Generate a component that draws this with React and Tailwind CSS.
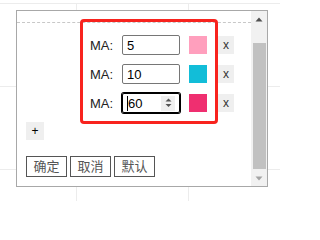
export default function App() {
  const rows = [
    { v: "5", c: "bg-[#ff9fbd]" },
    { v: "10", c: "bg-[#12bdd8]" },
    { v: "60", c: "bg-[#ef2f70]", focus: true },
  ];
  return (
    <div className="relative w-[280px] h-[201px] overflow-hidden bg-white font-['Liberation_Sans','Noto_Sans_CJK_SC',sans-serif] text-[13px] text-black">
      <div className="pt-[3px]">
        {[0, 1, 2].map((r) => (
          <div key={r} className="flex h-[83px] border-t border-[#ececec]">
            <div className="w-[77px] border-r border-[#ececec]" />
            <div className="w-[112px] border-r border-[#ececec]" />
            <div className="flex-1" />
          </div>
        ))}
      </div>

      <div className="absolute left-[16px] top-[10px] flex h-[177px] w-[252px] border border-[#a8a8a8] bg-white">
        <div className="flex-1 pt-[11px]">
          <div className="border-t border-dashed border-[#c8c8c8]" />
          <div className="px-[9px] pt-[12px]">
            <div className="flex flex-col gap-[9px] pl-[64px]">
              {rows.map((r, i) => (
                <div key={i} className="flex h-[20px] items-center">
                  <span className="w-[32px] leading-none text-[#222]">MA:</span>
                  {r.focus ? (
                    <div className="flex h-[20px] w-[58px] items-center rounded-[2px] border border-black pl-[4px] pr-[4px] ring-1 ring-black">
                      <span className="h-[15px] w-px bg-black" />
                      <span className="leading-none">60</span>
                      <span className="ml-auto flex h-[15px] w-[14px] items-center justify-center bg-[#efefef]">
                        <svg width="7" height="10" viewBox="0 0 7 10">
                          <path d="M3.5 0.5 L6.5 3.5 L0.5 3.5 Z" fill="#555" />
                          <path d="M0.5 6 L6.5 6 L3.5 9 Z" fill="#555" />
                        </svg>
                      </span>
                    </div>
                  ) : (
                    <div className="flex h-[20px] w-[58px] items-center rounded-[2px] border border-[#767676] pl-[4px] leading-none">
                      {r.v}
                    </div>
                  )}
                  <div className={`ml-[9px] h-[18px] w-[18px] ${r.c}`} />
                  <div className="ml-[11px] flex h-[18px] w-[16px] items-center justify-center bg-[#efefef] text-[12px] leading-none text-[#333]">
                    x
                  </div>
                </div>
              ))}
            </div>
            <div className="mt-[9px] flex h-[18px] w-[18px] items-center justify-center bg-[#efefef] text-[12px] leading-none">
              +
            </div>
            <div className="mt-[16px] flex gap-[3px]">
              {["确定", "取消", "默认"].map((t) => (
                <div
                  key={t}
                  className="flex h-[21px] w-[41px] items-center justify-center border border-[#555] text-[13px] leading-none text-[#555]"
                >
                  {t}
                </div>
              ))}
            </div>
          </div>
        </div>
        <div className="flex w-[16px] flex-col bg-[#f1f1f1]">
          <div className="flex h-[16px] items-center justify-center">
            <svg width="8" height="5" viewBox="0 0 8 5">
              <path d="M4 0.5 L7.5 4.5 L0.5 4.5 Z" fill="#505050" />
            </svg>
          </div>
          <div className="flex-1 pl-[2px] pr-[1px] pt-[16px]">
            <div className="h-[126px] bg-[#c1c1c1]" />
          </div>
          <div className="flex h-[16px] items-center justify-center">
            <svg width="8" height="5" viewBox="0 0 8 5">
              <path d="M0.5 0.5 L7.5 0.5 L4 4.5 Z" fill="#a3a3a3" />
            </svg>
          </div>
        </div>
      </div>

      <div className="pointer-events-none absolute left-[80px] top-[19px] h-[105px] w-[138px] rounded-[4px] border-[3px] border-[#f8231e]" />
    </div>
  );
}
